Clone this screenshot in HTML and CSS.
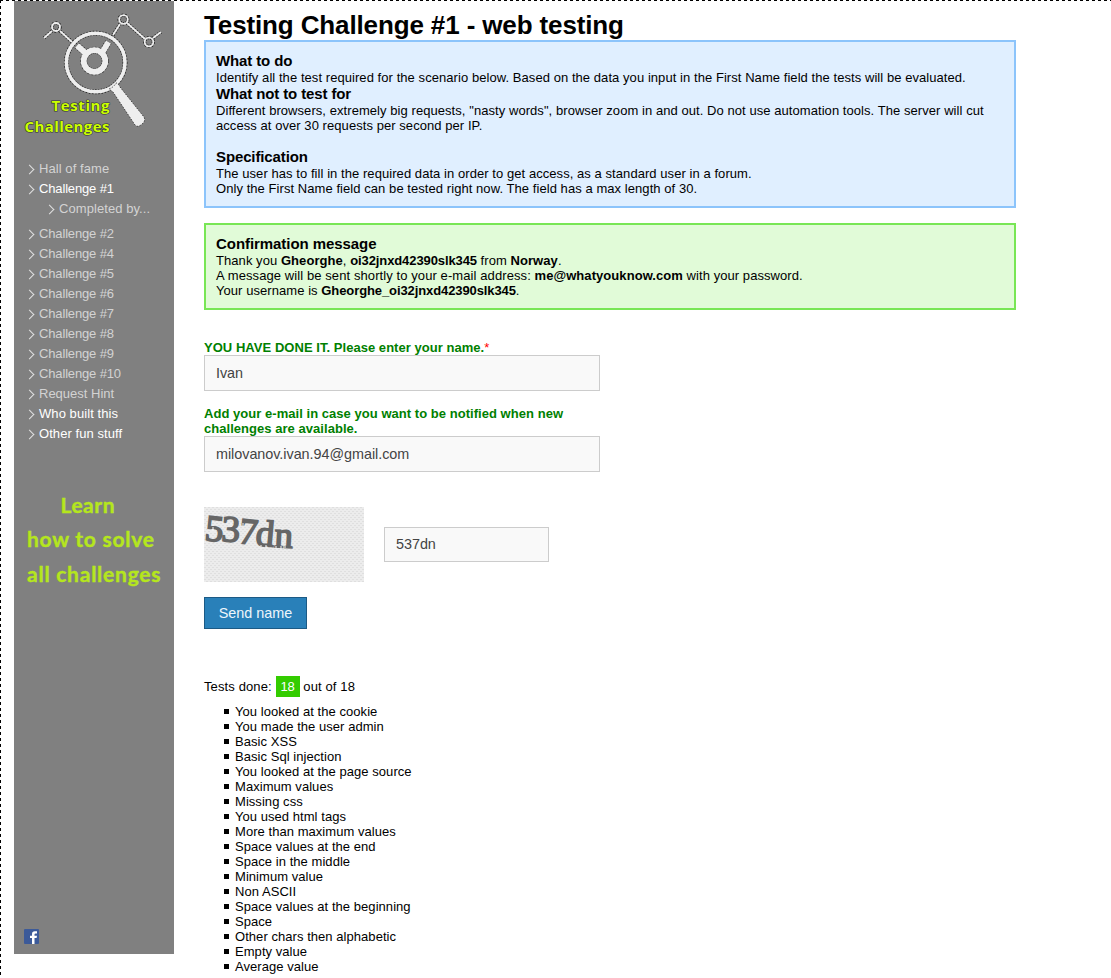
FILE: index.html
```html
<!DOCTYPE html>
<html lang="en">
<head>
<meta charset="utf-8">
<title>Testing Challenge #1 - web testing</title>
<link rel="stylesheet" href="styles.css">
</head>
<body>
<div class="page">
  <aside class="sidebar">
    <svg class="logo" width="160" height="149" viewBox="14 1 160 149">
      <g class="logo-shadow">
        <path d="M44 38l8-7M60 31l12 11M113 35l7-11M127 23l18 16M153 38l8-6"/>
        <circle cx="56" cy="27" r="4"/><circle cx="123.500" cy="19.500" r="4.300"/><circle cx="149" cy="42" r="4.300"/>
        <circle cx="95.700" cy="62.500" r="29.300" class="lens"/>
        <circle cx="94.500" cy="61" r="10.800" class="hub"/>
        <path d="M77 45.500l8 7M108.500 42l-5.500 9" class="hub"/>
      </g>
      <g class="logo-line">
        <path d="M44 38l8-7M60 31l12 11M113 35l7-11M127 23l18 16M153 38l8-6"/>
        <circle cx="56" cy="27" r="4"/><circle cx="123.500" cy="19.500" r="4.300"/><circle cx="149" cy="42" r="4.300"/>
        <circle cx="95.700" cy="62.500" r="29.300" class="lens"/>
        <circle cx="94.500" cy="61" r="10.800" class="hub"/>
        <path d="M77 45.500l9 8M108.500 42l-6 10" class="hub"/>
      </g>
      <path class="handle" d="M109 89q5-2 7-6 2 0 4 4l24 30q2 4-2 7-4 4-7 1L113 92z"/>
      <text class="logo-text" x="51.500" y="111" textLength="58">Testing</text>
      <text class="logo-text" x="24.500" y="132" textLength="85">Challenges</text>
    </svg>
    <ul class="menu">
      <li class="wide">Hall of fame</li>
      <li class="on">Challenge #1</li>
      <li class="sub wide">Completed by...</li>
      <li>Challenge #2</li>
      <li>Challenge #4</li>
      <li>Challenge #5</li>
      <li>Challenge #6</li>
      <li>Challenge #7</li>
      <li>Challenge #8</li>
      <li>Challenge #9</li>
      <li>Challenge #10</li>
      <li class="even">Request Hint</li>
      <li class="on wide">Who built this</li>
      <li class="on wide">Other fun stuff</li>
    </ul>
    <svg class="learn" width="160" height="120">
      <text x="46.500" y="34" textLength="54">Learn</text>
      <text x="13" y="68" textLength="127">how to solve</text>
      <text x="13" y="103" textLength="133.500">all challenges</text>
    </svg>
    <svg class="facebook" width="15" height="15">
      <rect width="15" height="15" rx="1" fill="#3c5a99"/>
      <path d="M8 15V9H6V6.700h2V5q0-2.800 2.800-2.800H13v2.300h-1.400q-1.100 0-1.100 1v1.200H13L12.600 9h-2.100v6z" fill="#fff"/>
    </svg>
  </aside>
  <main class="main">
    <h1>Testing Challenge #1 - web testing</h1>
    <section class="box info">
      <h2>What to do</h2>
      <p>Identify all the test required for the scenario below. Based on the data you input in the First Name field the tests will be evaluated.</p>
      <h2>What not to test for</h2>
      <p>Different browsers, extremely big requests, "nasty words", browser zoom in and out. Do not use automation tools. The server will cut access at over 30 requests per second per IP.</p>
      <h2 class="spaced">Specification</h2>
      <p>The user has to fill in the required data in order to get access, as a standard user in a forum.<br>Only the First Name field can be tested right now. The field has a max length of 30.</p>
    </section>
    <section class="box done">
      <h2>Confirmation message</h2>
      <p>Thank you <b>Gheorghe</b>, <b class="tight">oi32jnxd42390slk345</b> from <b>Norway</b>.<br><span class="loose">A message will be sent shortly to your e-mail address:</span> <b>me@whatyouknow.com</b> with your password.<br>Your username is <b class="tight">Gheorghe_oi32jnxd42390slk345</b>.</p>
    </section>
    <form class="form">
      <label for="name">YOU HAVE DONE IT. Please enter your name.<span class="star">*</span></label>
      <input id="name" type="text" value="Ivan">
      <label for="mail">Add your e-mail in case you want to be notified when new challenges are available.</label>
      <input id="mail" type="text" value="milovanov.ivan.94@gmail.com">
      <div class="captcha">
        <svg width="160" height="75">
          <defs><pattern id="weave" width="4" height="4" patternUnits="userSpaceOnUse"><rect width="4" height="4" fill="#ececec"/><path d="M0 0h2v1H0zM2 2h2v1H2z" fill="#dfdfdf"/></pattern></defs>
          <rect width="160" height="75" fill="url(#weave)"/>
          <g class="code">
            <text x="0" y="33" transform="rotate(6 0 33)">5</text>
            <text x="17" y="34" transform="rotate(3 17 34)">3</text>
            <text x="34" y="36" transform="rotate(6 34 36)">7</text>
            <text x="51" y="38" transform="rotate(5 51 38)">d</text>
            <text x="70" y="40" transform="rotate(3 70 40)">n</text>
          </g>
          <path d="M57 38v4M62 38v3M72 39v3M77 39v3M81 39v2M9 20v5M27 16v4M39 16v3" stroke="#f6f6f6"/>
        </svg>
        <input type="text" value="537dn" aria-label="Code">
      </div>
      <button type="button">Send name</button>
    </form>
    <p class="score">Tests done: <span class="count">18</span> out of 18</p>
    <ul class="tests">
      <li>You looked at the cookie</li>
      <li>You made the user admin</li>
      <li>Basic XSS</li>
      <li>Basic Sql injection</li>
      <li>You looked at the page source</li>
      <li>Maximum values</li>
      <li>Missing css</li>
      <li>You used html tags</li>
      <li>More than maximum values</li>
      <li>Space values at the end</li>
      <li>Space in the middle</li>
      <li>Minimum value</li>
      <li>Non ASCII</li>
      <li>Space values at the beginning</li>
      <li>Space</li>
      <li>Other chars then alphabetic</li>
      <li>Empty value</li>
      <li>Average value</li>
    </ul>
  </main>
</div>
</body>
</html>
```
FILE: styles.css
```css
* { box-sizing: border-box; margin: 0; padding: 0; }
body { font: 13px/15px "Liberation Sans", Arial, sans-serif; color: #000; background: #fff; }
ul { list-style: none; }
.page {
  display: flex; align-items: flex-start; gap: 30px;
  height: 978px; overflow: hidden; padding: 1px 0 0 14px;
  background:
    repeating-linear-gradient(90deg, #000 0 3px, #fff 3px 6px) 0 0 / 100% 1px no-repeat,
    repeating-linear-gradient(180deg, #000 0 3px, #fff 3px 6px) 0 0 / 1px 100% no-repeat;
}
.sidebar { width: 160px; height: 953px; background: #808080; display: flex; flex-direction: column; }
.sidebar svg { display: block; flex: none; }
.logo-shadow { fill: none; stroke: #222; stroke-width: 3.4; stroke-dasharray: 1.5 1.5; }
.logo-line { fill: none; stroke: #eee; stroke-width: 1.8; }
.logo-shadow .lens { stroke-width: 5; }
.logo-line .lens { stroke-width: 3.6; }
.logo-shadow .hub { stroke-width: 7; }
.logo-line .hub { stroke-width: 5.8; }
.handle { fill: #eee; stroke: #222; stroke-width: .8; stroke-dasharray: 1.5 1.5; }
.logo-text { font: 700 15px "Open Sans", sans-serif; fill: #cf0; stroke: #333; stroke-width: 1.2px; paint-order: stroke; }
.menu { padding: 9px 0 0 15px; }
.menu li { height: 20px; line-height: 20px; padding-left: 10px; color: #d3d3d3; position: relative; letter-spacing: -.15px; }
.menu .wide { letter-spacing: .07px; }
.menu .even { letter-spacing: 0; }
.menu li::before {
  content: ""; position: absolute; left: -2px; top: 7px; width: 6px; height: 6px;
  border: solid #e0e0e0; border-width: 1px 1px 0 0; transform: translateX(-1px) rotate(45deg);
}
.menu .sub { margin: 0 0 5px 20px; }
.menu .on { color: #fff; }
.learn { margin-top: 35px; font: 700 21px Lato, sans-serif; fill: #b5e61d; stroke: #b5e61d; stroke-width: .4px; }
.sidebar .facebook { margin: auto 0 10px 10px; }
.main { width: 812px; padding-top: 9px; }
h1 { font-size: 26px; line-height: 30px; letter-spacing: -.13px; }
.box { border: 2px solid; padding: 10px; }
.box h2 { font-size: 15px; line-height: 18px; letter-spacing: -.12px; }
.done h2 { letter-spacing: -.06px; }
.box p { letter-spacing: .062px; }
.box .tight { letter-spacing: -.1px; }
.box .loose { letter-spacing: .09px; }
.box .spaced { margin-top: 15px; }
.info { background: #e0efff; border-color: #8cc4fb; }
.done { background: #e1fbd8; border-color: #78e655; margin-top: 15px; }
.form { margin-top: 30px; width: 396px; }
.form label { display: block; font-weight: bold; color: green; letter-spacing: .04px; }
.star { color: red; font-weight: normal; }
.form input {
  display: block; width: 396px; height: 36px; padding: 0 11px 1px; margin-bottom: 15px;
  border: 1px solid #ccc; background: #f9f9f9; color: #444; font: 14.4px "Liberation Sans", Arial, sans-serif; letter-spacing: -.04px;
}
.captcha { display: flex; align-items: center; gap: 20px; margin-top: 35px; height: 75px; }
.captcha input { width: 165px; height: 35px; margin: 0; }
.code { font: 37px "Liberation Serif", serif; fill: #666; stroke: #666; stroke-width: 1.6px; }
.form button {
  display: block; width: 103px; height: 32px; margin-top: 15px; padding-bottom: 1px;
  border: 1px solid #1c5a85; background: #2980b9; color: #eef6fc; font: 14.4px "Liberation Sans", Arial, sans-serif;
}
.score { margin-top: 47px; line-height: 21px; letter-spacing: .12px; }
.count { display: inline-block; padding: 0 5px; background: #3c0; color: #fff; letter-spacing: -.2px; }
.tests { padding: 7px 0 0 31px; letter-spacing: .05px; }
.tests li { position: relative; }
.tests li::before { content: ""; position: absolute; left: -11px; top: 5px; width: 5px; height: 5px; background: #000; }
```
